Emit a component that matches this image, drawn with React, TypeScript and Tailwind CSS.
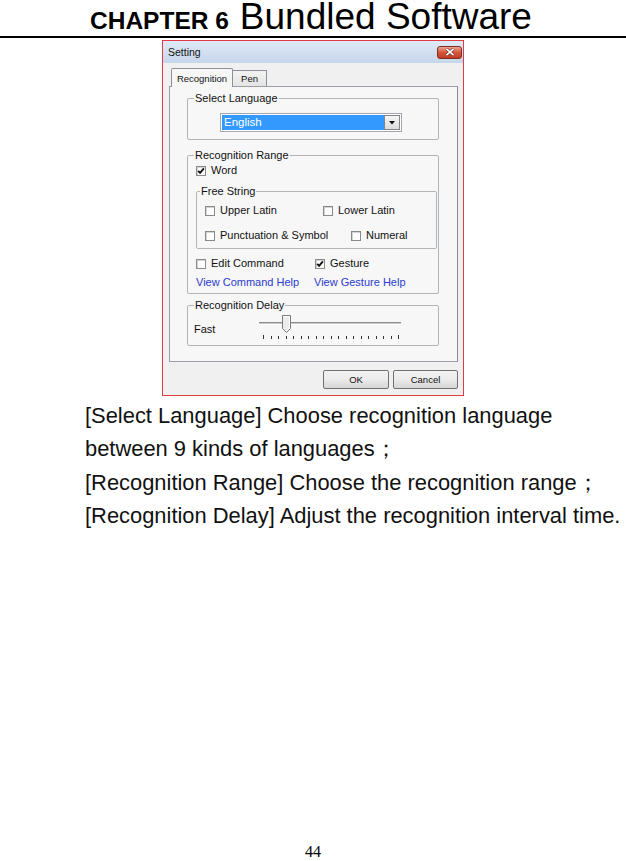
import React from "react";

const SANS = { fontFamily: '"Liberation Sans", Arial, sans-serif' };

function Check({ checked }: { checked?: boolean }) {
  return (
    <span className="w-[10px] h-[10px] border border-[#8a8a8a] bg-white shadow-[inset_1px_1px_0_#d4d4d4] flex items-center justify-center shrink-0">
      {checked && (
        <svg width="8" height="8" viewBox="0 0 8 8">
          <path d="M1.2 3.8 L3.1 5.9 L6.9 1.4" stroke="#111" strokeWidth="1.9" fill="none" />
        </svg>
      )}
    </span>
  );
}

function Item({ label, checked, className }: { label: string; checked?: boolean; className?: string }) {
  return (
    <div className={"flex items-center gap-[5px] h-[13px] leading-[13px] shrink-0 " + (className ?? "")}>
      <Check checked={checked} />
      <span>{label}</span>
    </div>
  );
}

function Slider() {
  const ticks = Array.from({ length: 19 }, (_, i) => 4 + (i * 135) / 18);
  return (
    <svg width="146" height="27" viewBox="0 0 146 27" className="mt-[2px] shrink-0">
      <line x1="0" y1="8.5" x2="142" y2="8.5" stroke="#8d8d8d" strokeWidth="1" />
      <line x1="0" y1="9.5" x2="142" y2="9.5" stroke="#c8c8c8" strokeWidth="1" />
      <line x1="0" y1="10.5" x2="142" y2="10.5" stroke="#ffffff" strokeWidth="1" />
      <path
        d="M23.5 1.5 H31.5 V14.5 L27.5 18.5 L23.5 14.5 Z"
        fill="#ececec"
        stroke="#7b7b7b"
        strokeWidth="1"
      />
      <path d="M24.5 2.5 H30.5 V14 L27.5 17" fill="none" stroke="#ffffff" strokeWidth="1" />
      {ticks.map((x, i) => (
        <line
          key={i}
          x1={Math.round(x) + 0.5}
          y1={i === 0 || i === 18 ? 21 : 22}
          x2={Math.round(x) + 0.5}
          y2="25"
          stroke="#333"
          strokeWidth="1"
        />
      ))}
    </svg>
  );
}

export default function App() {
  return (
    <div className="w-[626px] h-[861px] bg-white text-black flex flex-col" style={SANS}>
      {/* Header */}
      <div className="h-[36px] flex items-baseline pl-[90px] whitespace-nowrap">
        <span className="text-[24.5px] font-bold leading-[34px]">CHAPTER 6</span>
        <span className="text-[37px] leading-[34px] ml-[11px]">Bundled Software</span>
      </div>
      <div className="h-[2px] bg-black" />

      {/* Dialog */}
      <div className="mt-[2px] ml-[162px] w-[302px] h-[356px] border border-[#e03c44] bg-[#f0f0f0] flex flex-col text-[11px] leading-[13px] text-[#111]">
        {/* Title bar */}
        <div className="h-[22px] flex items-center bg-gradient-to-b from-[#e0eaf6] to-[#c6d6eb] shrink-0">
          <span className="pl-[5px] text-[10.5px]">Setting</span>
          <div className="ml-auto mr-[1px] w-[25px] h-[13px] rounded-[3px] border border-[#7e2f22] bg-gradient-to-b from-[#eaa494] via-[#d4553c] to-[#c23c24] flex items-center justify-center">
            <svg width="10" height="8" viewBox="0 0 10 8">
              <path d="M1.5 0.8 L8.5 7.2 M8.5 0.8 L1.5 7.2" stroke="#5a1a10" strokeWidth="2.8" />
              <path d="M1.5 0.8 L8.5 7.2 M8.5 0.8 L1.5 7.2" stroke="#ffffff" strokeWidth="1.7" />
            </svg>
          </div>
        </div>

        {/* Client */}
        <div className="flex flex-col pt-[5px]">
          {/* Tabs */}
          <div className="h-[18px] ml-[8px] flex items-start">
            <div className="relative z-10 h-[19px] w-[62px] border border-b-0 border-[#8c8f96] bg-[#f7f7f7] text-[9.5px] flex items-center justify-center rounded-t-[2px]">
              Recognition
            </div>
            <div className="mt-[2px] h-[16px] w-[34px] border border-l-0 border-b-0 border-[#8c8f96] bg-gradient-to-b from-[#f4f4f4] to-[#e4e4e4] text-[9.5px] flex items-center justify-center">
              Pen
            </div>
          </div>

          {/* Panel */}
          <div className="ml-[6px] w-[289px] h-[276px] border border-[#9a9ea5] border-r-[#8a8a8a] bg-[#f7f7f7] flex flex-col">
            {/* Select Language */}
            <fieldset className="mt-[5px] ml-[17px] w-[252px] border border-[#b2b5b8] rounded-[2px] pb-[7px]">
              <legend className="ml-[6px] px-[1px] leading-[13px]">Select Language</legend>
              <div className="mt-[8px] ml-[32px] w-[182px] h-[19px] border border-[#a3a8ae] bg-white p-[1px] flex">
                <div className="flex-1 bg-[#3399ff] text-white text-[11.5px] leading-[15px] pl-[2px]">English</div>
                <div className="w-[16px] border border-[#858585] bg-gradient-to-b from-[#f6f6f6] to-[#dcdcdc] flex items-center justify-center">
                  <svg width="6" height="4" viewBox="0 0 6 4">
                    <path d="M0 0 H6 L3 3.5 Z" fill="#111" />
                  </svg>
                </div>
              </div>
            </fieldset>

            {/* Recognition Range */}
            <fieldset className="mt-[9px] ml-[17px] w-[252px] border border-[#b2b5b8] rounded-[2px] pb-[4px]">
              <legend className="ml-[6px] px-[1px] leading-[13px]">Recognition Range</legend>
              <Item label="Word" checked className="mt-[2px] ml-[8px]" />
              <fieldset className="mt-[8px] ml-[8px] w-[241px] border border-[#b2b5b8] rounded-[2px] pb-[6px]">
                <legend className="ml-[3px] px-[1px] leading-[13px]">Free String</legend>
                <div className="mt-[6px] ml-[8px] flex">
                  <Item label="Upper Latin" className="w-[118px]" />
                  <Item label="Lower Latin" />
                </div>
                <div className="mt-[12px] ml-[8px] flex">
                  <Item label="Punctuation & Symbol" className="w-[146px]" />
                  <Item label="Numeral" />
                </div>
              </fieldset>
              <div className="mt-[8px] ml-[8px] flex">
                <Item label="Edit Command" className="w-[119px]" />
                <Item label="Gesture" checked />
              </div>
              <div className="mt-[6px] ml-[8px] flex h-[13px] text-[#2a3bd0]">
                <span className="w-[118px]">View Command Help</span>
                <span>View Gesture Help</span>
              </div>
            </fieldset>

            {/* Recognition Delay */}
            <fieldset className="mt-[5px] ml-[17px] w-[252px] border border-[#b2b5b8] rounded-[2px]">
              <legend className="ml-[6px] px-[1px] leading-[13px]">Recognition Delay</legend>
              <div className="h-[33px] flex items-start">
                <span className="ml-[6px] mt-[11px] w-[65px]">Fast</span>
                <Slider />
              </div>
            </fieldset>
          </div>

          {/* Buttons */}
          <div className="mt-[8px] flex justify-end pr-[5px] gap-[4px] text-[9.5px]">
            <div className="w-[66px] h-[19px] border border-[#707070] rounded-[2px] bg-gradient-to-b from-[#f3f3f3] via-[#ebebeb] to-[#d6d6d6] flex items-center justify-center">
              OK
            </div>
            <div className="w-[65px] h-[19px] border border-[#707070] rounded-[2px] bg-gradient-to-b from-[#f3f3f3] via-[#ebebeb] to-[#d6d6d6] flex items-center justify-center">
              Cancel
            </div>
          </div>
        </div>
      </div>

      {/* Body text */}
      <div className="mt-[3px] pl-[85px] text-[21.9px] leading-[33.3px] text-[#111] whitespace-nowrap">
        <div>[Select Language] Choose recognition language</div>
        <div>between 9 kinds of languages；</div>
        <div>[Recognition Range] Choose the recognition range；</div>
        <div>[Recognition Delay] Adjust the recognition interval time.</div>
      </div>

      {/* Page number */}
      <div
        className="mt-auto mb-[0px] h-[18px] text-center text-[16px] leading-[18px]"
        style={{ fontFamily: '"Liberation Serif", "Times New Roman", serif' }}
      >
        44
      </div>
    </div>
  );
}
